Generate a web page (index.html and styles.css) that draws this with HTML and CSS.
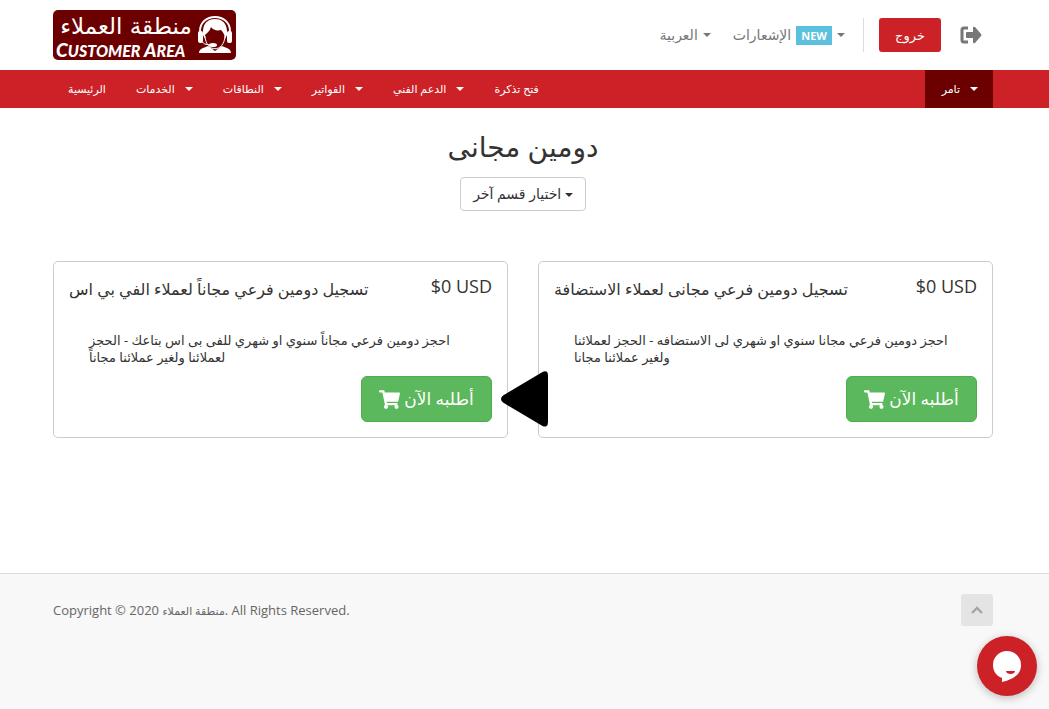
FILE: index.html
```html
<!DOCTYPE html>
<html lang="ar" dir="ltr">
<head>
<meta charset="utf-8">
<meta name="viewport" content="width=device-width, initial-scale=1">
<title>منطقة العملاء</title>
<link rel="stylesheet" href="styles.css">
</head>
<body>
<header class="topbar container">
  <a class="logo" href="#" aria-label="منطقة العملاء">
    <svg width="183" height="50" viewBox="0 0 183 50">
      <rect width="183" height="50" rx="5" fill="#6c0000"/>
      <text class="logo-ar" x="73" y="24" text-anchor="middle">منطقة العملاء</text>
      <text class="logo-en" x="3" y="47">C<tspan class="logo-small">USTOMER</tspan> A<tspan class="logo-small">REA</tspan></text>
      <path d="M147 22C146 2 178 2 177 22" fill="none" stroke="#fff" stroke-width="2"/>
      <path d="M150 25C149 13 155 9 162 9s13 4 12 16l-2 4c0-4-2-7-4-9-4 1-8 0-10-3-1 4-4 6-6 8v4z" fill="#fff"/>
      <path d="M152 26c1 17 19 17 20 0" fill="none" stroke="#fff" stroke-width="1"/>
      <rect x="145" y="21" width="5" height="12" rx="2" fill="#fff"/>
      <rect x="174" y="21" width="5" height="12" rx="2" fill="#fff"/>
      <path d="M148 31q3 4 9 4" fill="none" stroke="#fff" stroke-width="1"/>
      <ellipse cx="160" cy="35" rx="4" ry="2" fill="#fff"/>
      <path d="M146 43c0-4 4-5 9-7l7 5 7-5c5 2 9 3 9 7z" fill="#fff"/>
    </svg>
  </a>
  <div class="tools">
    <button class="plain" type="button">العربية <span class="caret"></span></button>
    <button class="plain" type="button">الإشعارات <span class="badge">NEW</span> <span class="caret"></span></button>
    <div class="session">
      <a class="logout" href="#">خروج</a>
      <a class="exit" href="#" aria-label="خروج">
        <svg width="22" height="18" viewBox="0 0 22 18"><path d="M8 2H4Q2 2 2 4v10q0 2 2 2h4" fill="none" stroke="#777" stroke-width="3"/><path d="M6 7q0-1 1-1h6V2q0-2 2-1l6 7q1 1 0 2l-6 7q-2 1-2-1v-4H7q-1 0-1-1z" fill="#777"/></svg>
      </a>
    </div>
  </div>
</header>
<nav class="mainnav">
  <div class="container nav-row">
    <a class="item" href="#">الرئيسية</a>
    <a class="item" href="#">الخدمات <span class="caret"></span></a>
    <a class="item" href="#">النطاقات <span class="caret"></span></a>
    <a class="item" href="#">الفواتير <span class="caret"></span></a>
    <a class="item" href="#">الدعم الفني <span class="caret"></span></a>
    <a class="item" href="#">فتح تذكرة</a>
    <a class="item account" href="#">تامر <span class="caret"></span></a>
  </div>
</nav>
<main class="container main">
  <h1 class="title">دومين مجانى</h1>
  <button class="picker" type="button">اختيار قسم آخر <span class="caret"></span></button>
  <div class="products">
    <section class="card">
      <header class="card-head"><h2 class="name">تسجيل دومين فرعي مجاناً لعملاء الفي بي اس</h2><span class="price">$0 USD</span></header>
      <p class="desc">احجز دومين فرعي مجاناً سنوي او شهري للفى بى اس بتاعك - الحجز<br>لعملائنا ولغير عملائنا مجاناً</p>
      <a class="order" href="#"><svg class="cart" width="21" height="19" viewBox="0 0 576 512"><path fill="#fff" d="M528 301l47-208c4-15-8-29-23-29H159l-9-45C148 8 138 0 126 0H24C11 0 0 11 0 24v16c0 13 11 24 24 24h70l70 343c-17 10-28 28-28 49 0 31 25 56 56 56s56-25 56-56c0-16-6-30-17-40h210c-11 10-17 24-17 40 0 31 25 56 56 56s56-25 56-56c0-22-13-41-32-50l6-25c3-15-8-29-24-29H218l-6-32h293c11 0 21-8 23-19z"/></svg> أطلبه الآن</a>
      <svg class="pointer" width="47" height="56" viewBox="0 0 47 56"><path d="M3 25L42 2q4-2 4 2v47q0 5-4 3L3 31q-4-3 0-6z" fill="#000" stroke="#000" stroke-width="2"/></svg>
    </section>
    <section class="card">
      <header class="card-head"><h2 class="name">تسجيل دومين فرعي مجانى لعملاء الاستضافة</h2><span class="price">$0 USD</span></header>
      <p class="desc">احجز دومين فرعي مجانا سنوي او شهري لى الاستضافه - الحجز لعملائنا<br>ولغير عملائنا مجانا</p>
      <a class="order" href="#"><svg class="cart" width="21" height="19" viewBox="0 0 576 512"><path fill="#fff" d="M528 301l47-208c4-15-8-29-23-29H159l-9-45C148 8 138 0 126 0H24C11 0 0 11 0 24v16c0 13 11 24 24 24h70l70 343c-17 10-28 28-28 49 0 31 25 56 56 56s56-25 56-56c0-16-6-30-17-40h210c-11 10-17 24-17 40 0 31 25 56 56 56s56-25 56-56c0-22-13-41-32-50l6-25c3-15-8-29-24-29H218l-6-32h293c11 0 21-8 23-19z"/></svg> أطلبه الآن</a>
    </section>
  </div>
</main>
<footer class="footer">
  <div class="container footer-row">
    <p class="copyright">Copyright © 2020 <span class="owner">منطقة العملاء</span>. All Rights Reserved.</p>
    <a class="to-top" href="#" aria-label="أعلى الصفحة"><svg width="12" height="8" viewBox="0 0 12 8"><path d="M1 7l5-5 5 5" fill="none" stroke="#a4a4a4" stroke-width="2.4"/></svg></a>
  </div>
</footer>
<button class="chat" type="button" aria-label="محادثة">
  <svg width="30" height="32" viewBox="0 0 30 32"><path d="M15 1a14 14 0 0 1 14 14c0 6-3 10-8 13-4 2-7 3-11 4v-4C4 26 1 21 1 15A14 14 0 0 1 15 1z" fill="#fff"/><path d="M14 21h9c0 4-9 4-9 0z" fill="#cc2127"/></svg>
</button>
</body>
</html>
```
FILE: styles.css
```css
* { box-sizing: border-box; }
body {
  margin: 0;
  min-height: 100vh;
  display: flex;
  flex-direction: column;
  background: #fff;
  color: #333;
  font: 13px/18px "Open Sans", "DejaVu Sans", sans-serif;
}
a { color: inherit; text-decoration: none; }
button { font: inherit; color: inherit; cursor: pointer; }
.container { width: 100%; padding: 0 56px 0 53px; }
.caret {
  display: inline-block;
  border: 4px solid transparent;
  border-top-color: currentColor;
  border-bottom: 0;
  vertical-align: middle;
}
.topbar { height: 70px; display: flex; align-items: center; justify-content: space-between; }
.logo svg { display: block; }
.logo-ar { font: 23px "DejaVu Sans", sans-serif; fill: #fff; }
.logo-en { font: italic 900 19px Lato, sans-serif; fill: #fff; }
.logo-small { font-size: 16px; }
.tools { display: flex; align-items: center; color: #777; gap: 22px; }
.plain { display: flex; align-items: center; gap: 5px; border: 0; padding: 0; background: none; font-size: 14px; }
.badge { background: #5bc0de; color: #fff; font-size: 11px; font-weight: 700; padding: 0 5px; line-height: 19px; }
.session { display: flex; align-items: center; gap: 19px; border-left: 1px solid #ddd; padding: 0 11px 0 15px; margin-left: -4px; }
.logout { background: #cc2127; color: #fff; border-radius: 3px; width: 62px; line-height: 34px; text-align: center; }
.exit svg { display: block; }
.mainnav { background: #cc2127; color: #fff; }
.nav-row { display: flex; }
.item { display: flex; align-items: center; gap: 10px; height: 38px; padding: 0 15px; font-size: 11px; }
.account { background: #6c0000; margin-left: auto; padding: 0 15px 0 17px; }
.main { flex: 1; text-align: center; }
.title { margin: 20px 0 13px; font-size: 28px; line-height: 36px; font-weight: 400; }
.picker { height: 34px; padding: 0 12px; background: #fff; border: 1px solid #ccc; border-radius: 4px; font-size: 14px; }
.products { display: grid; grid-template-columns: 1fr 1fr; gap: 30px; margin: 50px 0 40px; text-align: left; }
.card { position: relative; border: 1px solid #ccc; border-radius: 5px; padding: 15px; display: flex; flex-direction: column; }
.card-head { display: flex; justify-content: space-between; line-height: 18px; }
.name { margin: 0; font-size: 16px; font-weight: 400; line-height: 24px; white-space: nowrap; }
.price { font-size: 18px; white-space: nowrap; }
.desc { margin: 31px 20px 10px; font-size: 13px; line-height: 17px; white-space: nowrap; }
.order { align-self: flex-end; display: flex; align-items: center; justify-content: center; gap: 4px; width: 131px; height: 46px; border: 1px solid #4cae4c; border-radius: 6px; background: #5cb85c; color: #fff; font-size: 17px; white-space: nowrap; }
.pointer { position: absolute; right: -41px; top: 109px; z-index: 1; }
.footer { background: #f8f8f8; border-top: 1px solid #ddd; min-height: 136px; padding-top: 20px; color: #666; }
.footer-row { display: flex; align-items: center; justify-content: space-between; }
.copyright { margin: 0; }
.owner { font-size: 11px; }
.to-top { width: 32px; height: 32px; display: flex; align-items: center; justify-content: center; background: #e4e4e4; border-radius: 3px; }
.chat { position: fixed; right: 12px; bottom: 13px; width: 60px; height: 60px; padding: 0; border: 0; border-radius: 50%; background: #cc2127; display: flex; align-items: center; justify-content: center; box-shadow: 0 2px 8px rgba(0, 0, 0, .25); }
```
